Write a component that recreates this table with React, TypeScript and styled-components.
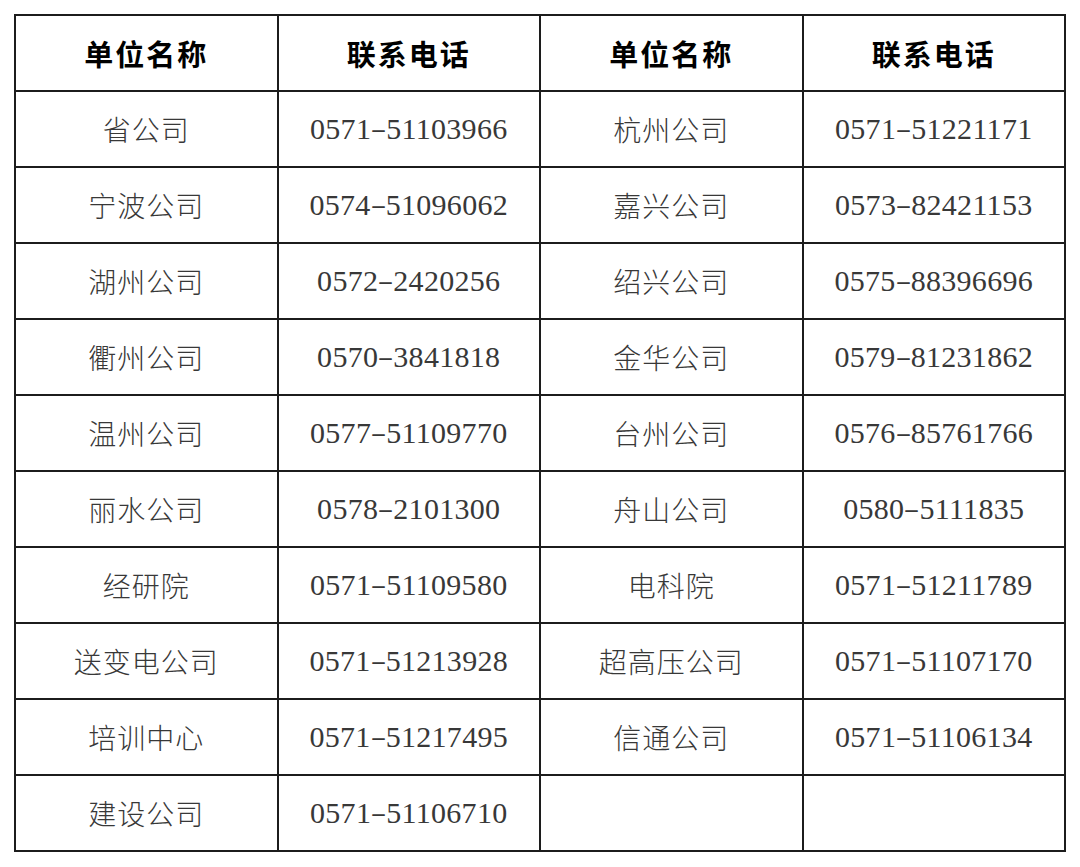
import React from "react";
import styled, { createGlobalStyle } from "styled-components";

const Global = createGlobalStyle`
  html, body { margin: 0; padding: 0; background: #ffffff; }
  body { font-family: "Noto Sans CJK SC", sans-serif; }
`;

const Page = styled.div`
  width: 1080px;
  height: 867px;
  padding: 14px 0 0 14px;
  box-sizing: border-box;
  background: #fff;
`;

const Table = styled.table`
  width: 1052px;
  border-collapse: collapse;
  table-layout: fixed;
`;

const Cell = styled.td<{ $head?: boolean; $num?: boolean }>`
  height: 74px;
  padding: 0;
  border: 2px solid #1c1c1c;
  text-align: center;
  vertical-align: middle;
  color: ${(p) => (p.$head ? "#000000" : "#383838")};
  font-family: ${(p) =>
    p.$num
      ? `"Liberation Serif", "Noto Sans CJK SC", serif`
      : `"Noto Sans CJK SC", sans-serif`};
  font-size: ${(p) => (p.$num ? "30px" : p.$head ? "29px" : "28px")};
  font-weight: ${(p) => (p.$head ? 700 : 300)};
  letter-spacing: ${(p) => (p.$num ? "0.3px" : p.$head ? "2px" : "1px")};
  line-height: 1;
`;

const Dash = styled.span`
  display: inline-block;
  width: 15px;
  transform: scaleX(1.6) scaleY(0.8);
  text-align: center;
  letter-spacing: 0;
`;

const rows: [string, string, string, string][] = [
  ["省公司", "0571-51103966", "杭州公司", "0571-51221171"],
  ["宁波公司", "0574-51096062", "嘉兴公司", "0573-82421153"],
  ["湖州公司", "0572-2420256", "绍兴公司", "0575-88396696"],
  ["衢州公司", "0570-3841818", "金华公司", "0579-81231862"],
  ["温州公司", "0577-51109770", "台州公司", "0576-85761766"],
  ["丽水公司", "0578-2101300", "舟山公司", "0580-5111835"],
  ["经研院", "0571-51109580", "电科院", "0571-51211789"],
  ["送变电公司", "0571-51213928", "超高压公司", "0571-51107170"],
  ["培训中心", "0571-51217495", "信通公司", "0571-51106134"],
  ["建设公司", "0571-51106710", "", ""],
];

const Phone: React.FC<{ value: string }> = ({ value }) => {
  if (!value) return null;
  const [a, b] = value.split("-");
  return (
    <>
      {a}
      <Dash>-</Dash>
      {b}
    </>
  );
};

export default function App() {
  return (
    <>
      <Global />
      <Page>
        <Table>
          <tbody>
            <tr>
              <Cell $head>单位名称</Cell>
              <Cell $head>联系电话</Cell>
              <Cell $head>单位名称</Cell>
              <Cell $head>联系电话</Cell>
            </tr>
            {rows.map((r, i) => (
              <tr key={i}>
                <Cell>{r[0]}</Cell>
                <Cell $num>
                  <Phone value={r[1]} />
                </Cell>
                <Cell>{r[2]}</Cell>
                <Cell $num>
                  <Phone value={r[3]} />
                </Cell>
              </tr>
            ))}
          </tbody>
        </Table>
      </Page>
    </>
  );
}
